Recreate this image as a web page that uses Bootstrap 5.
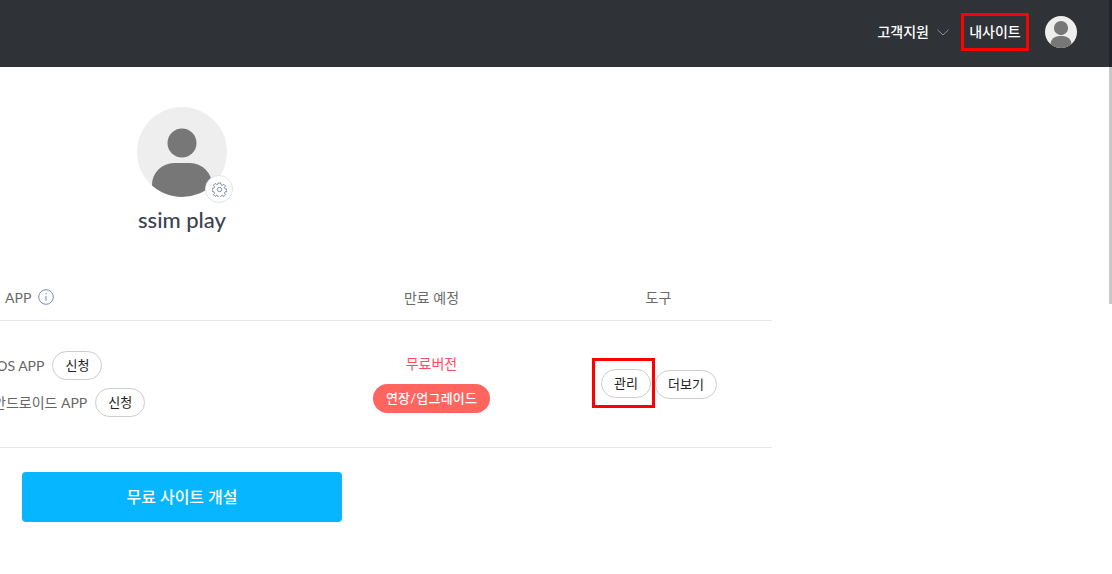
<!DOCTYPE html>
<html lang="ko">
<head>
<meta charset="utf-8">
<title>내사이트</title>
<link href="https://cdn.jsdelivr.net/npm/bootstrap@5.3.0/dist/css/bootstrap.min.css" rel="stylesheet">
<style>
html,body{height:574px;overflow:hidden;background:#fff}
body{font-family:"Lato","Noto Sans CJK KR",sans-serif;color:#3e4450;font-size:14px}
.top-bar{height:67px;background:#2f3337;padding:0 35px 3px 0}
.top-link{color:#fff;font-weight:500;font-size:14px;line-height:18px;text-decoration:none}
.hl-box{border:3px solid #f00;height:38px;width:68px;margin:0 16px 0 12px}
.user-ava{width:32px;height:32px}
.page-col{width:772px}
.profile{width:364px;padding-top:40px}
.pic-wrap{width:90px;height:90px}
.pic-wrap>svg{width:90px;height:90px;display:block}
.gear-badge{position:absolute;right:-6px;bottom:-6px;width:28px;height:28px;border-radius:50%;background:#fff;border:1px solid #dfe3ea}
.site-name{font-size:22px;line-height:26px;font-weight:500;color:#3b4252;margin-top:10px}
.head-row{height:47px;margin-top:41px;border-bottom:1px solid #e8e8e8;color:#6a6a6a;font-size:14px}
.body-row{height:127px;border-bottom:1px solid #e8e8e8}
.c-a{width:318px}
.c-b{width:227px}
.c-c{width:227px}
.app-name{margin-left:5px}
.info-ic{width:16px;height:16px;margin-left:7px}
.pill{display:inline-block;border:1px solid #ccc;border-radius:15px;background:#fff;color:#222;font-size:13px;line-height:16px;padding:5px 12px;height:29px;flex:none}
.app-line{height:29px;color:#666;font-size:14px;line-height:18px;gap:8px;white-space:nowrap}
.app-line+.app-line{margin-top:8px}
.app-ios{margin-left:-7px}
.app-and{margin-left:-7px}
.free-label{color:#ff4d5a;font-size:14px;line-height:18px}
.renew{display:inline-block;background:#ff645f;color:#fff;font-size:13px;font-weight:500;letter-spacing:.2px;line-height:19px;padding:5px 13px;border-radius:15px;margin-top:11px;height:29px}
.tools{padding:0 0 1px 47px}
.hl-tool{border:3px solid #f00;width:63px;height:50px;padding-right:1px;margin-bottom:1px}
.more-pill{margin-top:1px}
.open-btn{width:320px;height:50px;background:#06b6ff;color:#fff;font-size:16px;font-weight:500;border:0;border-radius:4px;margin:24px 0 0 22px;display:block}
.open-btn:hover{background:#06b6ff;color:#fff}
.scroll-thumb{position:fixed;top:0;right:0;width:3px;height:304px;background:linear-gradient(#232527 67px,#c9c9c9 67px)}
</style>
</head>
<body>
<header class="top-bar d-flex align-items-center justify-content-end">
  <a class="top-link d-flex align-items-center" href="#">고객지원
    <svg class="ms-2" width="12" height="7" viewBox="0 0 12 7" fill="none" stroke="#8b8f95" stroke-width="1"><path d="M.5.8 6 6l5.5-5.2"/></svg></a>
  <div class="hl-box d-flex align-items-center justify-content-center"><a class="top-link" href="#">내사이트</a></div>
  <svg class="user-ava" viewBox="0 0 90 90"><defs><clipPath id="ca"><circle cx="45" cy="45" r="45"/></clipPath></defs><circle cx="45" cy="45" r="45" fill="#eee"/><g clip-path="url(#ca)" fill="#777"><circle cx="45" cy="34" r="20"/><rect x="15" y="56" width="60" height="50" rx="24"/></g></svg>
</header>
<main class="page-col">
  <section class="profile d-flex flex-column align-items-center">
    <div class="pic-wrap position-relative">
      <svg viewBox="0 0 90 90"><defs><clipPath id="cb"><circle cx="45" cy="45" r="45"/></clipPath></defs><circle cx="45" cy="45" r="45" fill="#eee"/><g clip-path="url(#cb)" fill="#777"><circle cx="45" cy="36" r="14.500"/><rect x="15" y="56" width="60" height="50" rx="22"/></g></svg>
      <span class="gear-badge d-flex align-items-center justify-content-center">
        <svg width="15" height="15" viewBox="0 0 16 16" fill="none" stroke="#7484a8" stroke-width="1" stroke-linejoin="round"><circle cx="8" cy="8" r="2.300"/><path d="M6.800 1h2.400l.4 2 1.400.6 1.700-1.100 1.700 1.700-1.100 1.700.6 1.400 2 .4v2.400l-2 .4-.6 1.400 1.100 1.700-1.700 1.700-1.700-1.100-1.400.6-.4 2H6.800l-.4-2-1.400-.6-1.700 1.100-1.700-1.700 1.100-1.700-.6-1.400-2-.4V6.800l2-.4.6-1.400-1.100-1.700 1.700-1.700 1.700 1.100 1.400-.6z"/></svg>
      </span>
    </div>
    <div class="site-name">ssim play</div>
  </section>
  <div class="head-row d-flex align-items-center">
    <div class="c-a d-flex align-items-center"><span class="app-name d-flex align-items-center">APP
      <svg class="info-ic" viewBox="0 0 16 16" fill="none" stroke="#7d88b5"><circle cx="8" cy="8" r="7.300"/><path d="M8 7v5M8 4v1.400"/></svg></span></div>
    <div class="c-b text-center">만료 예정</div>
    <div class="c-c text-center">도구</div>
  </div>
  <div class="body-row d-flex align-items-center">
    <div class="c-a">
      <div class="app-line app-ios d-flex align-items-center">iOS APP <a class="pill text-decoration-none" href="#">신청</a></div>
      <div class="app-line app-and d-flex align-items-center">안드로이드 APP <a class="pill text-decoration-none" href="#">신청</a></div>
    </div>
    <div class="c-b text-center">
      <div class="free-label">무료버전</div>
      <a class="renew text-decoration-none" href="#">연장/업그레이드</a>
    </div>
    <div class="c-c tools d-flex align-items-center">
      <div class="hl-tool d-flex align-items-center justify-content-end"><a class="pill text-decoration-none" href="#">관리</a></div>
      <a class="pill more-pill text-decoration-none" href="#">더보기</a>
    </div>
  </div>
  <button class="btn open-btn" type="button">무료 사이트 개설</button>
</main>
<div class="scroll-thumb"></div>
</body>
</html>
